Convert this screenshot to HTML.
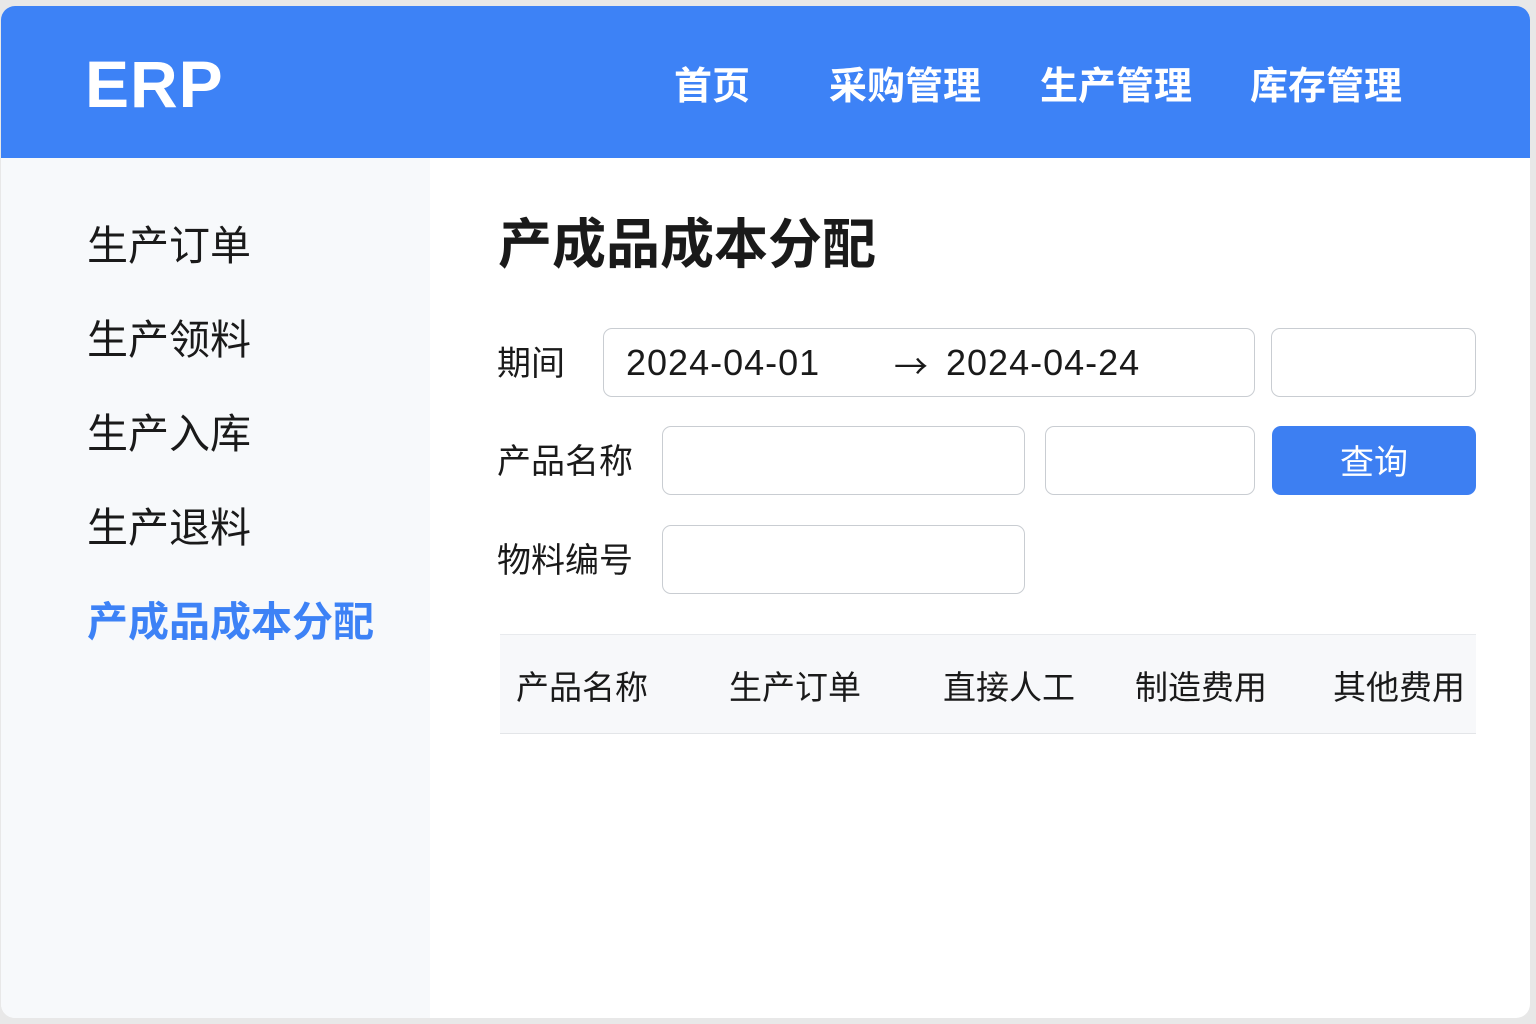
<!DOCTYPE html>
<html><head><meta charset="utf-8"><style>
*{margin:0;padding:0;box-sizing:border-box}
body{width:1536px;height:1024px;background:#e8e8e8;font-family:"Liberation Sans","Noto Sans CJK SC",sans-serif;position:relative;overflow:hidden}
.win{position:absolute;left:1px;top:6px;width:1529px;height:1012px;background:#fff;border-radius:14px;overflow:hidden}
.hd{position:absolute;left:0;top:0;width:100%;height:152px;background:#3d82f6}
.logo{position:absolute;left:84px;top:40px;color:#fff;font-size:66px;font-weight:bold;letter-spacing:1px}
.nav{position:absolute;top:49px;color:#fff;font-size:38px;font-weight:bold;font-family:"Noto Sans CJK SC",sans-serif}
.sb{position:absolute;left:0;top:152px;width:429px;height:860px;background:#f7f9fb}
.si{position:absolute;left:86px;font-size:41px;color:#1a1a1a;font-family:"Noto Sans CJK SC",sans-serif}
.t{position:absolute;font-family:"Noto Sans CJK SC",sans-serif;color:#1a1a1a}
.box{position:absolute;border:1.5px solid #c9cdd2;border-radius:9px;background:#fff}
</style></head><body>
<div class="win">
<div class="hd">
<div class="logo">ERP</div>
<div class="nav" style="left:673px">首页</div>
<div class="nav" style="left:828px">采购管理</div>
<div class="nav" style="left:1039px">生产管理</div>
<div class="nav" style="left:1249px">库存管理</div>
</div>
<div class="sb">
<div class="si" style="top:54px">生产订单</div>
<div class="si" style="top:148px">生产领料</div>
<div class="si" style="top:242px">生产入库</div>
<div class="si" style="top:336px">生产退料</div>
<div class="si" style="top:430px;color:#3d82f6;font-weight:bold">产成品成本分配</div>
</div>
<div class="t" style="left:497px;top:194px;font-size:54px;font-weight:bold">产成品成本分配</div>
<div class="t" style="left:496px;top:330px;font-size:34px">期间</div>
<div class="box" style="left:602px;top:322px;width:652px;height:69px"></div>
<div class="t" style="left:625px;top:336px;font-size:36px;letter-spacing:1px;font-family:'Liberation Sans',sans-serif">2024-04-01</div>
<div class="t" style="left:893px;top:334px;font-size:34px">→</div>
<div class="t" style="left:945px;top:336px;font-size:36px;letter-spacing:1px;font-family:'Liberation Sans',sans-serif">2024-04-24</div>
<div class="box" style="left:1270px;top:322px;width:205px;height:69px"></div>
<div class="t" style="left:496px;top:428px;font-size:34px">产品名称</div>
<div class="box" style="left:661px;top:420px;width:363px;height:69px"></div>
<div class="box" style="left:1044px;top:420px;width:210px;height:69px"></div>
<div style="position:absolute;left:1271px;top:420px;width:204px;height:69px;background:#3d7ff2;border-radius:9px;color:#fff;font-size:34px;text-align:center;line-height:67px;font-family:'Noto Sans CJK SC',sans-serif">查询</div>
<div class="t" style="left:496px;top:527px;font-size:34px">物料编号</div>
<div class="box" style="left:661px;top:519px;width:363px;height:69px"></div>
<div style="position:absolute;left:499px;top:628px;width:976px;height:100px;background:#f7f8fa;border-top:1.5px solid #e8eaed;border-bottom:1.5px solid #e3e5e8"></div>
<div class="t" style="left:515px;top:655px;font-size:33px">产品名称</div>
<div class="t" style="left:728px;top:655px;font-size:33px">生产订单</div>
<div class="t" style="left:942px;top:655px;font-size:33px">直接人工</div>
<div class="t" style="left:1134px;top:655px;font-size:33px">制造费用</div>
<div class="t" style="left:1332px;top:655px;font-size:33px">其他费用</div>
</div>
</body></html>
